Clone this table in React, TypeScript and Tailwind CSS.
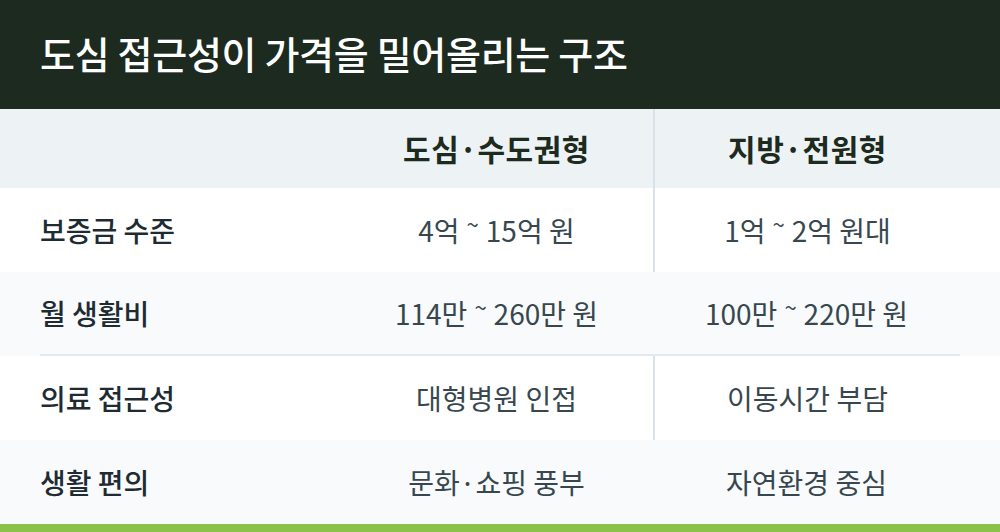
const rows = [
  { label: '보증금 수준', city: ['4억', '15억 원'], rural: ['1억', '2억 원대'] },
  { label: '월 생활비', city: ['114만', '260만 원'], rural: ['100만', '220만 원'] },
  { label: '의료 접근성', city: ['대형병원 인접'], rural: ['이동시간 부담'] },
  { label: '생활 편의', city: ['문화·쇼핑 풍부'], rural: ['자연환경 중심'] },
];

const font = { fontFamily: '"Noto Sans CJK KR", "Noto Sans", sans-serif' };

function Value({ parts }: { parts: string[] }) {
  if (parts.length === 1) return <span>{parts[0]}</span>;
  return (
    <span>
      {parts[0]}
      <span className="inline-block mx-[7px] text-[22px] -translate-y-[9px]">~</span>
      {parts[1]}
    </span>
  );
}

export default function App() {
  return (
    <div className="w-[1000px] h-[532px] flex flex-col bg-white" style={font}>
      <div className="h-[109px] bg-[#1c2a20] px-10 pb-1 flex items-center">
        <h1 className="text-[38px] font-medium text-white tracking-[-0.3px]">도심 접근성이 가격을 밀어올리는 구조</h1>
      </div>

      <div className="h-[79px] bg-[#edf2f5] px-10 grid grid-cols-[300px_313px_1fr]">
        <div />
        <div className="flex items-center justify-center text-[30px] font-semibold text-[#1c2a20] tracking-[0.5px]">도심·수도권형</div>
        <div className="flex items-center justify-center text-[30px] font-semibold text-[#1c2a20] tracking-[0.5px] border-l-2 border-[#d8e2e8]">지방·전원형</div>
      </div>

      {rows.map((r, i) => {
        const even = i % 2 === 1;
        return (
          <div key={i} className={`h-[84px] ${even ? 'bg-[#f8fafb]' : 'bg-white'} px-10`}>
            <div className={`h-full grid grid-cols-[300px_313px_1fr] ${i === 1 ? 'border-b-2 border-[#e3e9ed]' : ''}`}>
              <div className="flex items-center text-[28px] font-medium text-[#1f2b33]">{r.label}</div>
              <div className="flex items-center justify-center text-[28px] text-[#37474f]">
                <Value parts={r.city} />
              </div>
              <div className={`flex items-center justify-center text-[28px] text-[#37474f] ${even ? '' : 'border-l-2 border-[#d8e2e8]'}`}>
                <Value parts={r.rural} />
              </div>
            </div>
          </div>
        );
      })}

      <div className="flex-1 bg-[#8bc34a]" />
    </div>
  );
}
